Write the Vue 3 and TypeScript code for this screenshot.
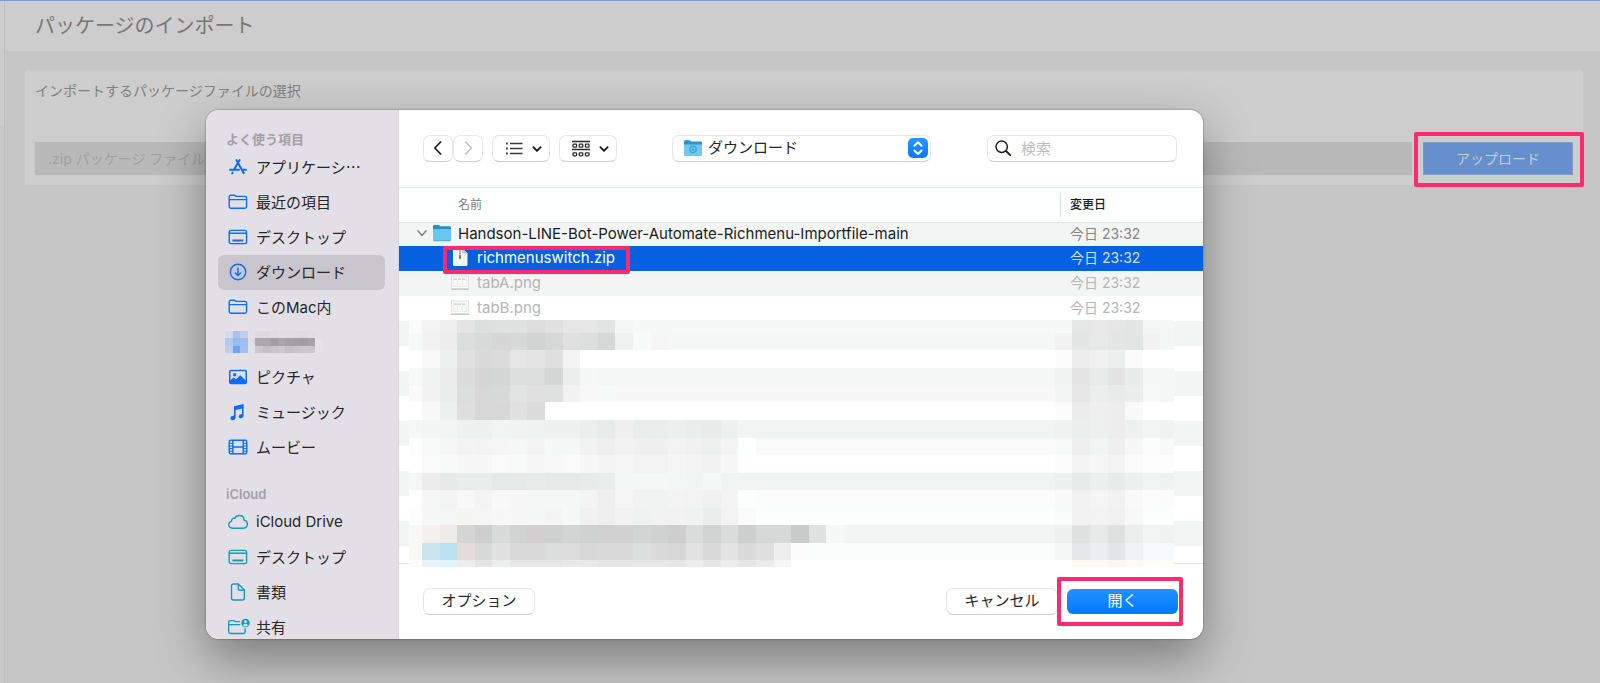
<script setup lang="ts">
import { ref } from 'vue'

type IconName =
  | 'apps' | 'folder' | 'desktop' | 'download' | 'picture'
  | 'music' | 'movie' | 'cloud' | 'document' | 'shared'

interface Place {
  id: string
  label: string
  icon?: IconName
}

interface Run {
  from: number
  to: number
  color: string
}

interface Block {
  x: number
  y: number
  w: number
  h: number
  fill: string
}

const favorites: Place[] = [
  { id: 'apps', label: 'アプリケーシ…', icon: 'apps' },
  { id: 'recent', label: '最近の項目', icon: 'folder' },
  { id: 'desktop', label: 'デスクトップ', icon: 'desktop' },
  { id: 'downloads', label: 'ダウンロード', icon: 'download' },
  { id: 'mac', label: 'このMac内', icon: 'folder' },
  { id: 'home', label: '' },
  { id: 'pictures', label: 'ピクチャ', icon: 'picture' },
  { id: 'music', label: 'ミュージック', icon: 'music' },
  { id: 'movies', label: 'ムービー', icon: 'movie' },
]

const cloud: Place[] = [
  { id: 'drive', label: 'iCloud Drive', icon: 'cloud' },
  { id: 'cdesktop', label: 'デスクトップ', icon: 'desktop' },
  { id: 'documents', label: '書類', icon: 'document' },
  { id: 'shared', label: '共有', icon: 'shared' },
]

const sections = [
  { title: 'よく使う項目', kind: 'local', places: favorites },
  { title: 'iCloud', kind: 'cloud', places: cloud },
]

const files = [
  { name: 'Handson-LINE-Bot-Power-Automate-Richmenu-Importfile-main', date: '今日 23:32', kind: 'folder' },
  { name: 'richmenuswitch.zip', date: '今日 23:32', kind: 'zip' },
  { name: 'tabA.png', date: '今日 23:32', kind: 'image' },
  { name: 'tabB.png', date: '今日 23:32', kind: 'image' },
]

const activePlace = ref('downloads')
const folder = ref('downloads')
const search = ref('')
const packageFile = ref('')

/* Obscured file rows: colours of the name blocks and of the date blocks, read left to right. */
const rowEdges = [0, 13, 30, 48, 65, 82, 100, 118, 135, 153, 170, 188, 205, 223, 240, 247]
const colEdge = (c: number): number => (c <= 0 ? 0 : Math.min(765, Math.round(13 + (c - 1) * 17.58)))

const rows: { base: string; names: string; dates: string }[] = [
  { base: 'f6f8f7', names: 'fbfbfb f3f3f3 eeefee e4e4e4 dddfde dfe1e0 dfe1e0 dddddd e0e0e0 e6e6e6 e5e6e5 e2e4e3 f4f6f5', dates: 'f6f7f7 e5e7e6 e9e8e8 e6e6e6 e3e5e4 f4f5f5 f5f7f6' },
  { base: 'f5f7f6', names: 'f6f8f7 f1f2f1 ededed dbdddc d8dad9 d6d6d6 d7d9d8 d2d4d3 d6d8d7 e0e0e0 dddfde d6d8d7 f0f2f1 f8f9f9 f6f5f5', dates: 'f2f2f2 e4e6e5 e7e9e8 e4e6e5 e3e5e4 f2f2f2 f5f7f6' },
  { base: 'ffffff', names: 'ffffff f9f9f9 eef0ef e0e0e0 dadada dbdbdb e6e6e6 e4e4e4 dfdfdf f3f3f3', dates: 'fcfcfc ededed f1f1f1 edefee fafafa ffffff ffffff' },
  { base: 'f4f6f5', names: 'f6f8f7 f1f3f2 ebebeb dbdbdb d5d5d5 d5d7d6 dcdedd dcdedd d5d7d6 eceeed f6f8f7 f4f6f5', dates: 'f1f3f2 e4e5e4 e9ebea e4e3e3 e9ebea f6f8f7 f4f6f5' },
  { base: 'f7f7f7', names: 'fafafa f2f2f2 ebedec dcdedd d7d7d7 d7d9d8 e2e4e3 e0e0e0 dfe1e0 f2f2f2 f8f8f8 f7f9f8', dates: 'f3f5f4 e6e6e6 eceeed e9ebea ebedec f7f9f8 f4f6f5' },
  { base: 'ffffff', names: 'ffffff f8f8f8 eef0ef dedede d7d7d7 d7d7d7 e1e1e1 dbdbdb', dates: 'fcfcfc ececec efefef ededed f9f9f9 ffffff ffffff' },
  { base: 'f2f4f3', names: 'f5f7f6 f3f5f4 f3f5f4 eff1f0 eff1f0 f2f4f3 f1f3f2 f0f2f1 eff1f0 eff1f0 eceeed e9ebea eeefee eaeceb ebedec edefee ebedec e9ebea eef0ef', dates: 'f0f2f1 eceeed eef0ef ecedec eff1f0 f2f4f3 f0f2f1' },
  { base: 'fafafa', names: 'fdfdfd f8faf9 f6f6f6 f4f4f4 f3f3f3 f5f5f5 f5f7f6 f4f4f4 f6f8f7 f6f8f7 f2f2f2 eeefee f2f2f2 f0f0f0 f0f0f0 f3f3f3 f1f1f1 eef0ef f4f4f4 fcfffd', dates: 'f8faf9 efefef f3f5f4 efefef f7f7f7 fbfdfc f9f9f9' },
  { base: 'fefefe', names: 'fefefe fafafa f8faf9 f7f7f7 f7f7f7 fafafa f8faf9 f7f7f7 f8f8f8 fafafa f7f7f7 f4f4f4 f5f5f5 f3f3f3 f3f3f3 f6f6f6 f4f4f4 f2f2f2 f7f7f7', dates: 'fcfcfc f3f3f3 f6f6f6 f3f3f3 fafafa fdfdfd fdfdfd' },
  { base: 'f2f4f3', names: 'f5f7f6 ececec e8eae9 eaeceb eaeceb e7e9e8 e7e9e8 e9ebea e7e9e8 e7e9e8 e9ebea eaeceb f4f6f5 f5f7f6 f5f7f6 f4f6f5 f3f5f4 f5f8f7 f2f4f3', dates: 'eff1f0 e9ebea edefee e9ebea eef0ef f2f4f3 f0f2f1' },
  { base: 'fcfcfc', names: 'fefefe f6f6f6 f3f3f3 f8f8f8 f4f4f4 f8f8f8 f7f7f7 f5f7f6 f5f7f6 f5f7f6 f4f4f4 efefef f5f5f5 f2f2f2 f1f3f2 f4f4f4 f3f3f3 f1f1f1 f4f4f4 fcfefd', dates: 'f9f9f9 f2f2f2 f5f5f5 f2f2f2 f9f9f9 fcfcfc fbfbfb' },
  { base: 'fcfdfd', names: 'fdfdfd f6f8f7 f4f6f5 f4f4f1 f5f5f5 f7f7f7 f6f6f6 f5f7f6 f4f4f4 f6f8f7 f1f1f1 efefef f2f2f2 f0f2f1 f2f2f2 f2f2f2 f0f2f1 ebedec f3f3f3 fafafa', dates: 'fafbfb f2f2f2 f3f3f3 f1f1f1 f8f8f8 fcfdfd fcfdfd' },
  { base: 'f3f5f4', names: 'f6f8f7 f3f0ef f0ebe8 d4d6d5 cecece d9dbda d1d3d2 d1cfcf cfd1d0 d3d5d4 d0d2d1 d1d1d1 d1d1d1 d3d5d4 d0d2d1 cecece dadcdb d1d3d2 dadcdb cdcfce d6d8d7 d7d9d8 c9cbca e0e2e1 f6f8f7', dates: 'eff1f0 e0e2e1 e7e9e8 dfe1e0 eceeed f2f4f3 f0f2f1' },
  { base: 'fbfcfc', names: 'fbf9f8 cae3ef bae0f2 e3dcd9 d7d9d8 e1e1e1 dadada dadada dbdddc dcdcdc d8d8d8 dadada dadada dcdedd dadada d7d7d7 e2e2e2 dadada e3e3e3 dadada dfdfdf eeeeee fcfcfc', dates: 'f6f8f7 e4e6e8 ebedef e4e5e7 f0f2f5 f7f9fc f7f9fb' },
  { base: 'ffffff', names: 'fdfcfb e8f3f9 e1f3fb eeedec e4e4e4 edefee e7e7e7 e7e7e7 e7e7e7 e9e9e9 e8e8e8 e6e6e6 e6e6e6 e7e7e7 e7e7e7 e6e6e6 ececec e6e6e6 ececec e6e6e6 ebebeb f5f5f5', dates: 'fefefe fefaf2 fdfaf4 fcf5f0 fffaf5 fffdf7 fffef9' },
]

const toRuns = (colors: string, start: number): Run[] =>
  colors.split(' ').map((c, i) => ({ from: start + i, to: start + i + 1, color: `#${c}` }))

const blocks: Block[] = rows.flatMap((row, r) => {
  const runs: Run[] = [
    { from: 0, to: 44, color: `#${row.base}` },
    ...toRuns(row.names, 0),
    ...toRuns(row.dates, 37),
  ]
  return runs.map((run) => ({
    x: colEdge(run.from),
    y: rowEdges[r],
    w: colEdge(run.to) - colEdge(run.from),
    h: rowEdges[r + 1] - rowEdges[r],
    fill: run.color,
  }))
})

const homeRows = [
  'e8dfe6 ecdfe3 ecdfe3 e3dfe6 e3dfe6 e3dfe6 e3dfe6 e3dfe6 e3dfe6 e3dfe6 e3dfe6 e3dfe6 e3dfe6',
  'd5d7ea a8c3ee c0cdec e3dfe8 dedae1 dcd8df dfdbe2 e1dde4 e0dce3 dfdbe2 dedae1 e1dde4 e3dfe6',
  'b2c8ee 9abbee a0bfee e0dde8 aaa7ad a9a6ac a19fa5 a8a5ab a4a2a8 a2a0a6 a09ea4 a5a2a8 e6e2e9',
  'bfcdec 73a2f1 a5c0ed e3dfe8 cac7ce c3c0c7 c6c3c9 cac7ce c2bfc6 c7c4ca cac7cd c9c6cc e5e1e8',
]
const homeBlocks: Block[] = homeRows.flatMap((line, r) =>
  line.split(' ').map((c, i) => ({
    x: Math.round(i * 7.5),
    y: r === 0 ? 0 : Math.round(r * 7.5) - 4,
    w: 8,
    h: r === 0 ? 4 : 8,
    fill: `#${c}`,
  })),
)
</script>

<template>
  <div class="page">
    <div class="rail" aria-hidden="true"></div>
    <div class="content">
      <header class="page-header">
        <h1>パッケージのインポート</h1>
      </header>
      <section class="card">
        <label for="package">インポートするパッケージファイルの選択</label>
        <div class="upload-row">
          <input id="package" v-model="packageFile" type="text" placeholder=".zip パッケージ ファイルの選択" />
          <div class="marked upload-mark">
            <button type="button" class="upload">アップロード</button>
          </div>
        </div>
      </section>
    </div>

    <div class="overlay">
      <div class="dialog" role="dialog" aria-label="ファイルを開く">
        <nav class="sidebar" aria-label="場所">
          <section v-for="s in sections" :key="s.title" :class="['group', s.kind]">
            <h2>{{ s.title }}</h2>
            <button
              v-for="p in s.places"
              :key="p.id"
              type="button"
              :aria-label="p.label || 'ホーム'"
              :class="['place', { active: activePlace === p.id, long: p.id === 'apps' }]"
              @click="activePlace = p.id"
            >
              <svg v-if="!p.icon" class="home-blocks" viewBox="0 0 98 26" shape-rendering="crispEdges">
                <rect v-for="(b, i) in homeBlocks" :key="i" :x="b.x" :y="b.y" :width="b.w" :height="b.h" :fill="b.fill" />
              </svg>
              <template v-else>
                <svg class="icon" viewBox="0 0 20 20" fill="none" stroke="currentColor" stroke-width="1.4" stroke-linecap="round" stroke-linejoin="round">
                  <g v-if="p.icon === 'apps'" stroke-width="2">
                    <path d="M11.6 3 6 12.8M8.4 3l7.4 13.2M2 12.8h9M14.2 12.8H18M4.6 15.6l-.4.8" />
                  </g>
                  <g v-else-if="p.icon === 'folder'">
                    <path d="M1.2 14.6V5c0-1 .6-1.7 1.7-1.7h3.2c.6 0 1 .2 1.4.6l.6.5h8.8c1.1 0 1.7.6 1.7 1.7v8.5c0 1.1-.6 1.7-1.7 1.7H2.9c-1.1 0-1.7-.6-1.7-1.7zM1.4 7.6h17" />
                  </g>
                  <g v-else-if="p.icon === 'desktop'">
                    <rect x="1.2" y="3.4" width="17.4" height="13.2" rx="1.8" />
                    <path d="M1.6 6.3h16.6" />
                    <path d="M4.4 13.5h11" stroke-width="2.2" stroke-linecap="butt" />
                  </g>
                  <g v-else-if="p.icon === 'download'">
                    <circle cx="10" cy="10" r="7.7" />
                    <path d="M10 6.2v7M7.4 10.9l2.6 2.6 2.6-2.6" />
                  </g>
                  <g v-else-if="p.icon === 'picture'">
                    <path d="M3 2.7h14c1.3 0 2 .7 2 2v10.6c0 1.3-.7 2-2 2H3c-1.3 0-2-.7-2-2V4.7c0-1.3.7-2 2-2zM2.5 4.8v8.2l3.2-2.6 2.3 1.9 4.3-4 5.2 4.9V4.8c0-.4-.2-.6-.6-.6H3.1c-.4 0-.6.2-.6.6z" fill="currentColor" fill-rule="evenodd" stroke="none" />
                    <circle cx="6.7" cy="7.8" r="1.7" fill="currentColor" stroke="none" />
                  </g>
                  <g v-else-if="p.icon === 'music'" fill="currentColor" stroke="none">
                    <path d="M6 4.2 15.6 2v11.6c0 1.6-1.2 2.7-2.7 2.7-1.3 0-2.2-.8-2.2-1.9 0-1.2.9-1.9 2.1-2.200l1.200-.3V6.600L7.600 8v7.200c0 1.700-1.300 3-3 3-1.300 0-2.200-.8-2.200-2 0-1.100.8-1.900 2-2.200L6 13.600z" />
                  </g>
                  <g v-else-if="p.icon === 'movie'">
                    <rect x="1.2" y="3.2" width="17.6" height="13.6" rx="1.5" />
                    <path d="M4.8 3.4v13.2M15.2 3.4v13.2M4.8 10h10.4" />
                    <path d="M1.5 6.3h3M1.5 9h3M1.5 11.6h3M1.5 14.2h3M15.5 6.3h3M15.5 9h3M15.5 11.6h3M15.5 14.2h3" stroke-width="1" />
                  </g>
                  <g v-else-if="p.icon === 'cloud'">
                    <path d="M4.6 16.2C2.3 16.2.8 14.7.8 12.7c0-1.7 1.1-3 2.7-3.3C3.4 7 5 5.9 6.8 6.4 7.6 4.5 9.3 3.5 11.3 3.5c2.7 0 4.7 2 4.9 4.7 1.9.4 3.2 1.9 3.2 3.9 0 2.3-1.7 4.1-4.1 4.1z" />
                  </g>
                  <g v-else-if="p.icon === 'document'">
                    <path d="M5.4 2h4.900l6.100 6.100v8c0 1.200-.7 1.900-1.900 1.900H5.400c-1.200 0-1.900-.7-1.900-1.900V3.900C3.500 2.700 4.200 2 5.400 2zM10.200 2.200v4.600c0 .9.500 1.400 1.400 1.400h4.600" />
                  </g>
                  <g v-else>
                    <path d="M11.500 4.600H7.400l-.8-.6c-.3-.3-.6-.4-1.100-.4H2.400C1.300 3.600.7 4.200.7 5.300v9.500c0 1.100.6 1.700 1.700 1.700h13c1.100 0 1.700-.6 1.700-1.700v-3M.8 7.600h11" />
                    <circle cx="17.500" cy="6" r="4.200" fill="currentColor" stroke="none" />
                    <circle cx="17.500" cy="4.700" r="1.400" fill="#e3dfe6" stroke="none" />
                    <path d="M15.100 8.500c.4-1.200 1.400-1.800 2.400-1.800s2 .6 2.400 1.800c-1.400 1.200-3.400 1.200-4.800 0z" fill="#e3dfe6" stroke="none" />
                  </g>
                </svg>
                <span>{{ p.label }}</span>
              </template>
            </button>
          </section>
        </nav>

        <div class="main">
          <div class="toolbar">
            <div class="nav-buttons">
              <button type="button" class="control nav-button" aria-label="戻る">
                <svg viewBox="0 0 16 16" fill="none" stroke="#1c1c1c" stroke-width="1.7" stroke-linecap="round" stroke-linejoin="round"><path d="M10.600 2 4.800 8l5.800 6" /></svg>
              </button>
              <button type="button" class="control nav-button" aria-label="進む" disabled>
                <svg viewBox="0 0 16 16" fill="none" stroke="#bdbdbd" stroke-width="1.5" stroke-linecap="round" stroke-linejoin="round"><path d="m5.600 2 5.800 6-5.800 6" /></svg>
              </button>
            </div>
            <button type="button" class="control menu-button" aria-label="リスト表示">
              <svg class="view-icon" viewBox="0 0 18 18" fill="none" stroke="#3a3a3a" stroke-width="1.3">
                <path d="M5 3.500h12.500M5 8.500h12.500M5 13.500h12.500" />
                <path d="M1 3.500h1.800M1 8.500h1.800M1 13.500h1.800" stroke-width="1.8" />
              </svg>
              <svg class="chevron" viewBox="0 0 10 10" fill="none" stroke="#1c1c1c" stroke-width="1.9" stroke-linecap="round" stroke-linejoin="round"><path d="m1.400 3.200 3.600 3.600 3.600-3.600" /></svg>
            </button>
            <button type="button" class="control menu-button" aria-label="グループ分け">
              <svg class="view-icon" viewBox="0 0 18 18" fill="none" stroke="#2b2b2b" stroke-width="1.3">
                <path d="M0 1.500h18M0 9.500h18" />
                <rect x="1" y="4.200" width="3.600" height="3" rx=".8" /><rect x="7.200" y="4.200" width="3.600" height="3" rx=".8" /><rect x="13.400" y="4.200" width="3.600" height="3" rx=".8" />
                <rect x="1" y="12.800" width="3.600" height="3" rx=".8" /><rect x="7.200" y="12.800" width="3.600" height="3" rx=".8" /><rect x="13.400" y="12.800" width="3.600" height="3" rx=".8" />
              </svg>
              <svg class="chevron" viewBox="0 0 10 10" fill="none" stroke="#1c1c1c" stroke-width="1.9" stroke-linecap="round" stroke-linejoin="round"><path d="m1.400 3.200 3.600 3.600 3.600-3.600" /></svg>
            </button>
            <div class="folder-select">
              <select v-model="folder" class="control" aria-label="フォルダ">
                <option value="downloads">ダウンロード</option>
                <option value="desktop">デスクトップ</option>
              </select>
              <svg class="select-folder" viewBox="0 0 18 18">
                <path d="M0 3c0-1.100.6-1.700 1.700-1.700h3.600c.6 0 1 .2 1.400.6l.7.600h9c1 0 1.600.6 1.600 1.600V8H0z" fill="#2795c9" />
                <path d="M0 5.400h18v10c0 1-.6 1.600-1.600 1.600H1.600C.6 17 0 16.400 0 15.400z" fill="#6fcaf3" />
                <circle cx="9" cy="10.300" r="3.200" fill="none" stroke="#3a9fd0" stroke-width="1.200" />
                <path d="M9 8.600v2.400M7.800 10.400 9 11.800l1.200-1.400z" stroke="#3a9fd0" fill="#3a9fd0" stroke-width=".8" />
              </svg>
              <svg class="stepper" viewBox="0 0 20 20" fill="none" stroke="#fff" stroke-width="2" stroke-linecap="round" stroke-linejoin="round">
                <defs><linearGradient id="stepper" x2="0" y2="1"><stop stop-color="#2f96ff" /><stop offset="1" stop-color="#007aff" /></linearGradient></defs>
                <rect width="20" height="20" rx="5" fill="url(#stepper)" stroke="none" />
                <path d="M6.400 7.700 10 4.300l3.600 3.400M6.400 12.500l3.600 3.400 3.600-3.400" />
              </svg>
            </div>
            <div class="search-box">
              <input v-model="search" class="control" type="search" placeholder="検索" aria-label="検索" />
              <svg viewBox="0 0 16 16" fill="none" stroke="#1c1c1c" stroke-width="1.5" stroke-linecap="round"><circle cx="6.700" cy="6.700" r="5.700" /><path d="m11 11 4.200 4.200" stroke-width="1.9" /></svg>
            </div>
          </div>

          <div class="list">
            <table>
              <thead>
                <tr>
                  <th class="name-head" scope="col">名前</th>
                  <th class="date-head" scope="col"><span>変更日</span></th>
                </tr>
              </thead>
              <tbody>
                <tr v-for="f in files" :key="f.name" :class="f.kind">
                  <td>
                    <div class="file">
                      <template v-if="f.kind === 'folder'">
                        <svg class="disclosure" viewBox="0 0 10 10" fill="none" stroke="#7d7f7e" stroke-width="1.4" stroke-linecap="round" stroke-linejoin="round"><path d="M.9 2.800 5 7.500l4.100-4.700" /></svg>
                        <svg class="thumb" viewBox="0 0 18 18">
                          <path d="M0 2.700C0 1.600.6 1 1.700 1h3.600c.6 0 1 .2 1.400.6l.7.600h9c1 0 1.600.6 1.600 1.600V8H0z" fill="#2191c6" />
                          <path d="M0 5h18v10.700c0 1-.6 1.600-1.600 1.600H1.600c-1 0-1.600-.6-1.600-1.600z" fill="#69c6f0" />
                          <path d="M.4 16.600h17.200" stroke="#4aacd9" stroke-width=".8" />
                        </svg>
                      </template>
                      <svg v-else-if="f.kind === 'zip'" class="thumb" viewBox="0 0 18 18">
                        <path d="M2 1.500C2 .6 2.400 0 3.300 0H11l5.500 5.500v11c0 .9-.4 1.500-1.300 1.500H3.300C2.400 18 2 17.400 2 16.500z" fill="#f3f3f3" />
                        <path d="M11 0v4.200c0 .9.400 1.300 1.300 1.300h4.200z" fill="#c9c9c9" />
                        <path d="M9 0v8" stroke="#777" stroke-width="1.6" stroke-dasharray="1 .6" />
                        <rect x="8" y="7" width="2" height="4" rx="1" fill="#777" />
                      </svg>
                      <svg v-else class="thumb" viewBox="0 0 18 18">
                        <rect x=".5" y="3" width="17" height="12.500" fill="#fff" stroke="#dfe0df" />
                        <path d="M0 16.300h18" stroke="#bfc1bf" />
                        <rect x="2.200" y="5" width="13.600" height="8.600" fill="#f8faf7" stroke="#dde8db" stroke-width=".6" />
                        <path d="M3 6.200h12" stroke="#b5d3b1" stroke-dasharray="3 1" />
                        <path d="M6.500 7v6M11.300 7v6" stroke="#e3ebe1" stroke-width=".6" />
                      </svg>
                      <span>{{ f.name }}</span>
                    </div>
                  </td>
                  <td class="date">{{ f.date }}</td>
                </tr>
              </tbody>
            </table>
            <span class="file-mark" aria-hidden="true"></span>
            <svg class="blocks" viewBox="0 0 765 247" preserveAspectRatio="none" shape-rendering="crispEdges" aria-hidden="true">
              <rect v-for="(b, i) in blocks" :key="i" :x="b.x" :y="b.y" :width="b.w" :height="b.h" :fill="b.fill" />
            </svg>
          </div>

          <footer class="footer">
            <button type="button" class="control action">オプション</button>
            <span class="spacer"></span>
            <button type="button" class="control action">キャンセル</button>
            <div class="marked open-mark">
              <button type="button" class="action primary">開く</button>
            </div>
          </footer>
        </div>
      </div>
    </div>
  </div>
</template>

<style>
body {
  margin: 0;
  background: #c6c6c6;
}
</style>

<style scoped>
.page {
  position: relative;
  display: flex;
  box-sizing: border-box;
  min-height: 100vh;
  overflow: hidden;
  border-top: 1px solid #7f9cd0;
  background: #c6c6c6;
  color: #727272;
  font-family: Inter, "Noto Sans CJK JP", sans-serif;
}
.page *,
.page *::before,
.page *::after {
  box-sizing: border-box;
}
button,
input,
select {
  margin: 0;
  font: inherit;
  color: inherit;
}
.rail {
  flex: none;
  width: 5px;
  border-right: 1px solid #bfbfbf;
  background: linear-gradient(#cdcdcd 125px, #c9c9c9 125px);
}
.content {
  flex: 1;
  min-width: 0;
}
.page-header {
  display: flex;
  align-items: center;
  height: 50px;
  padding: 0 30px;
  background: #cdcdcd;
}
h1 {
  margin: 0;
  font-size: 20px;
  font-weight: 400;
  line-height: 30px;
  color: #767676;
}
.card {
  margin: 19px 17px 0 20px;
  padding: 10px;
  background: #cdcdcd;
}
.card label {
  display: block;
  height: 62px;
  font-size: 14px;
  line-height: 22px;
  color: #808080;
}
.upload-row {
  display: flex;
  gap: 11px;
}
.upload-row input {
  flex: 1;
  min-width: 0;
  height: 33px;
  padding: 0 13px;
  border: 0;
  border-radius: 0;
  background: #b9b9b9;
  font-size: 14px;
}
.upload-row input::placeholder {
  color: #9f9f9f;
  opacity: 1;
}
.marked {
  position: relative;
}
.marked::after,
.file-mark {
  position: absolute;
  border: 4px solid #ff2a6d;
  border-radius: 2px;
  content: "";
  pointer-events: none;
}
.upload-mark::after {
  inset: -10px -11px -12px -9px;
}
.upload {
  display: block;
  width: 150px;
  height: 33px;
  padding: 0;
  border: 1px solid #7c9bd0;
  background: #668fce;
  color: #c9ccd2;
  font-size: 14px;
  line-height: 30px;
}

.overlay {
  position: absolute;
  inset: 0;
  padding: 109px 397px 0 206px;
}
.dialog {
  display: grid;
  grid-template-columns: 193px minmax(0, 1fr);
  overflow: hidden;
  border-radius: 13px;
  background: #fff;
  box-shadow: 0 0 1px 1px rgba(0, 0, 0, 0.16), 0 20px 50px rgba(0, 0, 0, 0.38);
  color: #262626;
}
.sidebar {
  height: 0;
  min-height: 100%;
  overflow: hidden;
  padding: 18px 13px 0 12px;
  border-right: 1px solid #d8d4db;
  background: #e3dfe6;
}
.group + .group {
  margin-top: 18px;
}
.group h2 {
  margin: 0;
  padding-left: 8px;
  font-size: 13px;
  font-weight: 600;
  line-height: 22px;
  color: #a29fa6;
}
.place {
  display: flex;
  align-items: center;
  gap: 8px;
  width: 100%;
  height: 35px;
  padding: 0 0 2px 10px;
  border: 0;
  border-radius: 6px;
  background: none;
  font-size: 15px;
  text-align: left;
  white-space: nowrap;
}
.place.active {
  background: #c9c5cc;
}
.place.long {
  font-family: "Noto Sans CJK JP", sans-serif;
}
.icon {
  flex: none;
  width: 20px;
  height: 20px;
  overflow: visible;
  color: #0a6cff;
}
.cloud .icon {
  color: #159bb8;
}
.home-blocks {
  align-self: flex-start;
  width: 98px;
  height: 26px;
  margin: 2px 0 0 -3px;
}

.main {
  display: flex;
  flex-direction: column;
  min-width: 0;
}
.toolbar {
  display: flex;
  align-items: flex-start;
  height: 78px;
  padding: 25px 26px 0 24px;
  border-bottom: 1px solid #e8e8e8;
}
.control {
  height: 27px;
  border: 1px solid #e6e6e6;
  border-bottom-color: #cbcbcb;
  border-radius: 7px;
  background: #fff;
}
.nav-buttons {
  display: flex;
  margin-right: 9px;
}
.nav-button {
  display: flex;
  align-items: center;
  justify-content: center;
  width: 30px;
  padding: 0 0 2px;
}
.nav-button svg {
  width: 16px;
  height: 16px;
}
.menu-button {
  display: flex;
  align-items: center;
  justify-content: space-between;
  width: 58px;
  margin-right: 9px;
  padding: 0 7px 0 12px;
}
.view-icon {
  width: 18px;
  height: 18px;
}
.chevron {
  width: 10px;
  height: 10px;
}
.folder-select {
  position: relative;
  flex: 1;
  margin-left: 46px;
}
.folder-select select {
  display: block;
  width: 100%;
  padding: 0 35px 2px;
  appearance: none;
  font-size: 15px;
  line-height: 22px;
}
.select-folder {
  position: absolute;
  top: 4px;
  left: 12px;
  width: 18px;
  height: 18px;
  pointer-events: none;
}
.stepper {
  position: absolute;
  top: 3px;
  right: 3px;
  width: 20px;
  height: 20px;
  pointer-events: none;
}
.search-box {
  position: relative;
  width: 190px;
  margin-left: 56px;
}
.search-box svg {
  position: absolute;
  top: 5px;
  left: 8px;
  width: 16px;
  height: 16px;
  pointer-events: none;
}
.search-box input {
  display: block;
  width: 100%;
  padding: 0 8px 0 33px;
  appearance: none;
  font-size: 15px;
}
.search-box input::placeholder {
  color: #bcbcbc;
  opacity: 1;
}

.list {
  position: relative;
  height: 376px;
  border-bottom: 1px solid #e0e0e0;
  background: repeating-linear-gradient(#f3f5f4 0 8px, #fff 8px 33px, #f3f5f4 33px 50px);
}
table {
  width: 100%;
  border-collapse: collapse;
  table-layout: fixed;
}
th {
  height: 34px;
  padding: 0;
  border-bottom: 1px solid #e4e4e4;
  background: #fdfefe;
  font-size: 12px;
  font-weight: 400;
  line-height: 24px;
  text-align: left;
}
.name-head {
  padding-left: 59px;
  color: #7d7d7d;
}
.date-head {
  width: 143px;
  font-weight: 500;
  color: #1c1c1c;
}
.date-head span {
  display: block;
  padding-left: 9px;
  border-left: 1px solid #dedede;
}
td {
  height: 25px;
  padding: 0 0 2px;
  font-size: 15px;
  line-height: 23px;
}
.file {
  display: flex;
  align-items: center;
  gap: 8px;
  height: 23px;
  padding-left: 52px;
  white-space: nowrap;
}
.folder td {
  height: 23px;
  background: #f3f5f4;
  color: #1c1c1c;
  line-height: 21px;
}
.folder .file {
  gap: 7px;
  height: 21px;
  padding-left: 18px;
}
.disclosure {
  width: 10px;
  height: 10px;
  margin-right: -1px;
}
.thumb {
  flex: none;
  width: 18px;
  height: 18px;
}
.zip td {
  background: #0560e2;
  color: #fff;
}
.image td {
  background: #f3f5f4;
  color: #b4b5b5;
}
.image + .image td {
  background: #fff;
}
td.date {
  padding-left: 10px;
  font-size: 14px;
}
.folder td.date {
  color: #858585;
}
.zip td.date {
  color: #d0e0fa;
}
.file-mark {
  top: 58px;
  left: 44px;
  width: 187px;
  height: 28px;
}
.blocks {
  position: absolute;
  top: 132px;
  left: 10px;
  width: calc(100% - 39px);
  height: 247px;
}

.footer {
  display: flex;
  align-items: flex-start;
  height: 75px;
  padding: 24px 25px 0 24px;
}
.spacer {
  flex: 1;
}
.action {
  width: 112px;
  padding: 0 0 2px;
  font-size: 15px;
  line-height: 22px;
}
.open-mark {
  margin: 1px 0 0 9px;
}
.open-mark::after {
  inset: -12px -5px -12px -10px;
}
.primary {
  display: block;
  width: 111px;
  height: 25px;
  border: 0;
  border-radius: 6px;
  background: linear-gradient(#2590ff, #007aff);
  color: #fff;
}
</style>
